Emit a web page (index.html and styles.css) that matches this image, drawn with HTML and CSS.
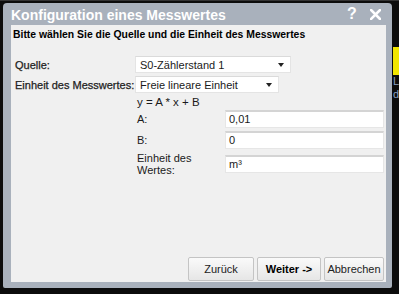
FILE: index.html
```html
<!DOCTYPE html>
<html lang="de">
<head>
  <meta charset="UTF-8">
  <title>Konfiguration eines Messwertes</title>
  <link rel="stylesheet" href="styles.css">
</head>
<body>
  <div class="dialog">
    <div class="titlebar">
      <span class="title">Konfiguration eines Messwertes</span>
      <span class="tb-btn">?</span>
      <span class="tb-btn close">
        <svg width="11" height="11" viewBox="0 0 11 11"><path d="M1 1L10 10M10 1L1 10" stroke="#fff" stroke-width="2.6" stroke-linecap="square"/></svg>
      </span>
    </div>
    <div class="content">
      <div class="heading">Bitte wählen Sie die Quelle und die Einheit des Messwertes</div>
      <div class="row">
        <label class="lbl">Quelle:</label>
        <div class="select sel-source"><span>S0-Zählerstand 1</span><span class="arrow"></span></div>
      </div>
      <div class="row">
        <label class="lbl">Einheit des Messwertes:</label>
        <div class="block">
          <div class="select sel-unit"><span>Freie lineare Einheit</span><span class="arrow"></span></div>
          <div class="formula">y = A * x + B</div>
          <div class="field">
            <span class="flabel">A:</span>
            <div class="input">0,01</div>
          </div>
          <div class="field">
            <span class="flabel">B:</span>
            <div class="input">0</div>
          </div>
          <div class="field">
            <span class="flabel">Einheit des Wertes:</span>
            <div class="input">m³</div>
          </div>
        </div>
      </div>
      <div class="buttons">
        <button class="btn btn-back">Zurück</button>
        <button class="btn btn-next">Weiter -&gt;</button>
        <button class="btn btn-cancel">Abbrechen</button>
      </div>
    </div>
  </div>
  <div class="side">
    <div class="side-yellow"></div>
    <div class="side-text">L<br>d</div>
  </div>
</body>
</html>
```

FILE: styles.css
```css
html, body {
  margin: 0;
  height: 100%;
}
body {
  background: #0c0c0c;
  font-family: "Liberation Sans", Arial, sans-serif;
  font-size: 11px;
  color: #1a1a1a;
  display: flex;
  align-items: flex-start;
  overflow: hidden;
  border-top: 1px solid #333;
  box-sizing: border-box;
}
.dialog {
  margin: 2px 0 0 3px;
  width: 389px;
  height: 285px;
  background: #a9b1bc;
  border-radius: 4px 4px 2px 2px;
  box-sizing: border-box;
  padding: 0 6px 6px 8px;
  display: flex;
  flex-direction: column;
}
.titlebar {
  height: 22px;
  display: flex;
  align-items: center;
  color: #fff;
  font-weight: bold;
}
.title {
  flex: 1;
  font-size: 14px;
  padding-top: 1px;
}
.tb-btn {
  font-size: 16px;
  width: 20px;
  text-align: center;
}
.tb-btn.close {
  display: flex;
  justify-content: center;
  margin-left: 3px;
  margin-right: 1px;
}
.content {
  flex: 1;
  background: #f0f0f0;
  display: flex;
  flex-direction: column;
  padding: 4px 2px 1px 2px;
}
.heading {
  font-weight: bold;
  color: #000;
  font-size: 10.4px;
  margin-bottom: 16px;
}
.row {
  display: flex;
  align-items: flex-start;
  margin-bottom: 3px;
}
.lbl {
  width: 120px;
  padding-left: 2px;
  color: #222;
  padding-top: 3px;
  white-space: nowrap;
  -webkit-text-stroke: 0.25px #222;
}
.select {
  background: #fff;
  border: 1px solid #e4e4e4;
  border-top-color: #dadada;
  height: 15px;
  display: flex;
  align-items: center;
  padding: 0 4px;
  justify-content: space-between;
}
.sel-source {
  width: 146px;
}
.sel-unit {
  width: 134px;
}
.arrow {
  width: 0;
  height: 0;
  border-left: 3px solid transparent;
  border-right: 3px solid transparent;
  border-top: 4px solid #222;
  margin-right: 2px;
}
.block {
  flex: 1;
}
.formula {
  padding-left: 2px;
  margin: 3px 0 1px;
  font-size: 11.5px;
  line-height: 13px;
}
.field {
  display: flex;
  align-items: center;
  margin-bottom: 3px;
}
.flabel {
  width: 88px;
  padding-left: 2px;
  line-height: 12px;
}
.input {
  flex: 1;
  background: #fff;
  border: 1px solid #e6e6e6;
  border-top: 2px solid #d4d4d4;
  height: 15px;
  line-height: 15px;
  padding: 0 3px;
}
.buttons {
  margin-top: auto;
  display: flex;
  justify-content: flex-end;
  gap: 3px;
}
.btn {
  font-family: inherit;
  font-size: 11px;
  color: #222;
  height: 24px;
  border: 1px solid #c4c4c4;
  border-radius: 2px;
  background: linear-gradient(#fafafa, #e6e6e6);
  padding: 0;
}
.btn-back {
  width: 66px;
}
.btn-next {
  width: 64px;
  font-weight: bold;
  color: #000;
}
.btn-cancel {
  width: 60px;
}
.side {
  margin-left: 1px;
  width: 6px;
  padding-top: 46px;
  overflow: hidden;
}
.side-yellow {
  height: 28px;
  background: #f2e600;
}
.side-text {
  color: #8aa0c0;
  font-size: 11px;
  line-height: 13px;
}
```
